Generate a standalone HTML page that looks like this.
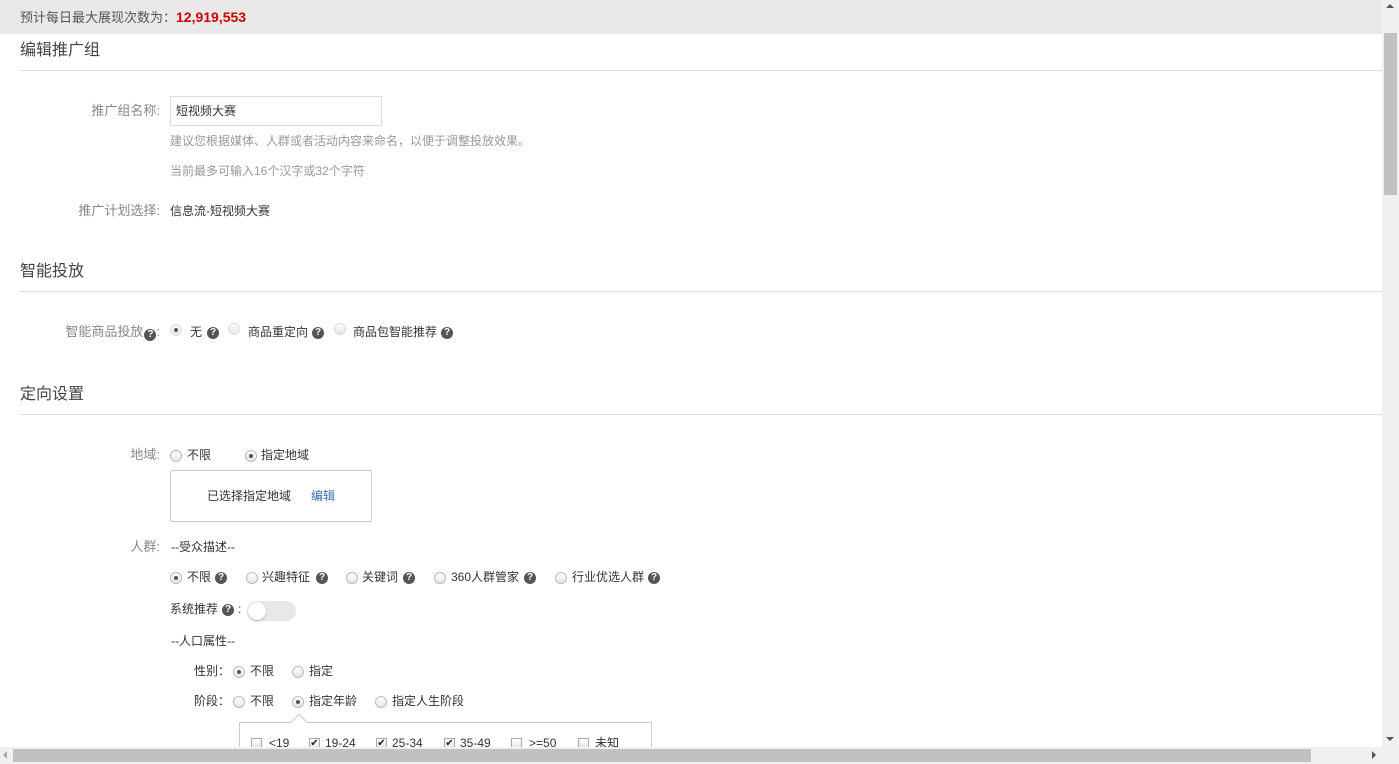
<!DOCTYPE html>
<html><head><meta charset="utf-8"><style>
*{margin:0;padding:0;box-sizing:border-box}
body{width:1399px;height:764px;overflow:hidden;background:#fff;font-family:"Liberation Sans","Noto Sans CJK SC",sans-serif;font-size:12px;color:#333;position:relative}
.a{position:absolute;white-space:nowrap;line-height:16px}
.top{position:absolute;left:0;top:0;width:1382px;height:34px;background:#e9e9e9}
.h{position:absolute;left:20px;font-size:16px;color:#444;line-height:20px}
.ln{position:absolute;left:20px;width:1362px;height:1px;background:#ddd}
.lb{position:absolute;width:160px;left:0;text-align:right;color:#888;font-size:13px;line-height:16px}
.r{position:absolute;width:12px;height:12px;border:1px solid #bbb;border-radius:50%;background:linear-gradient(#fff,#e6e6e6)}
.r.on::after{content:"";position:absolute;left:3px;top:3px;width:4px;height:4px;border-radius:50%;background:#555}
.q{position:absolute;width:12px;height:12px;border-radius:50%;background:#555;color:#fff;font-size:10px;font-weight:bold;line-height:12px;text-align:center}
.c{position:absolute;width:11px;height:11px;border:1px solid #aaa;background:linear-gradient(#fff,#e4e4e4);font-size:10px;line-height:9px;text-align:center;color:#222}
.g{color:#999}
</style></head><body>
<div class="top"></div>
<div class="a" style="left:20px;top:9px;font-size:13px;color:#555">预计每日最大展现次数为：<b style="color:#c00;font-size:14px">12,919,553</b></div>
<div class="h" style="top:41px">编辑推广组</div>
<div class="ln" style="top:70px"></div>
<div class="lb" style="top:103px">推广组名称:</div>
<div style="position:absolute;left:170px;top:96px;width:212px;height:30px;border:1px solid #ddd"></div>
<div class="a" style="left:176px;top:103px">短视频大赛</div>
<div class="a g" style="left:170px;top:133px">建议您根据媒体、人群或者活动内容来命名，以便于调整投放效果。</div>
<div class="a g" style="left:170px;top:163px">当前最多可输入16个汉字或32个字符</div>
<div class="lb" style="top:203px">推广计划选择:</div>
<div class="a" style="left:170px;top:203px">信息流-短视频大赛</div>
<div class="h" style="top:262px">智能投放</div>
<div class="ln" style="top:291px"></div>
<div class="lb" style="top:324px">智能商品投放<span style="display:inline-block;width:12px;height:12px;border-radius:50%;background:#555;color:#fff;font-size:10px;font-weight:bold;line-height:12px;text-align:center;vertical-align:-1px;margin-left:1px">?</span>:</div>
<div class="r on" style="left:170px;top:324px;border-color:#ddd"></div><div class="a" style="left:190px;top:324px">无</div><div class="q" style="left:207px;top:327px">?</div>
<div class="r" style="left:228px;top:323px;border-color:#ddd"></div><div class="a" style="left:248px;top:324px">商品重定向</div><div class="q" style="left:312px;top:327px">?</div>
<div class="r" style="left:334px;top:323px;border-color:#ddd"></div><div class="a" style="left:353px;top:324px">商品包智能推荐</div><div class="q" style="left:441px;top:327px">?</div>
<div class="h" style="top:385px">定向设置</div>
<div class="ln" style="top:414px"></div>
<div class="lb" style="top:447px">地域:</div>
<div class="r" style="left:170px;top:450px"></div><div class="a" style="left:187px;top:447px">不限</div>
<div class="r on" style="left:245px;top:450px"></div><div class="a" style="left:261px;top:447px">指定地域</div>
<div style="position:absolute;left:170px;top:470px;width:202px;height:52px;border:1px solid #ccc;border-radius:2px"></div>
<div class="a" style="left:207px;top:488px">已选择指定地域</div><div class="a" style="left:311px;top:488px;color:#3b6fb6">编辑</div>
<div class="lb" style="top:539px">人群:</div>
<div class="a" style="left:171px;top:539px">--受众描述--</div>
<div class="r on" style="left:170px;top:572px"></div><div class="a" style="left:187px;top:569px">不限</div><div class="q" style="left:215px;top:572px">?</div>
<div class="r" style="left:246px;top:572px"></div><div class="a" style="left:262px;top:569px">兴趣特征</div><div class="q" style="left:316px;top:572px">?</div>
<div class="r" style="left:346px;top:572px"></div><div class="a" style="left:362px;top:569px">关键词</div><div class="q" style="left:403px;top:572px">?</div>
<div class="r" style="left:434px;top:572px"></div><div class="a" style="left:451px;top:569px">360人群管家</div><div class="q" style="left:524px;top:572px">?</div>
<div class="r" style="left:555px;top:572px"></div><div class="a" style="left:572px;top:569px">行业优选人群</div><div class="q" style="left:648px;top:572px">?</div>
<div class="a" style="left:170px;top:601px">系统推荐</div><div class="q" style="left:222px;top:604px">?</div><div class="a" style="left:238px;top:601px">:</div>
<div style="position:absolute;left:247px;top:601px;width:49px;height:20px;border-radius:10px;background:#e8e8e8"><div style="position:absolute;left:1px;top:1px;width:18px;height:18px;border-radius:50%;background:#fff;box-shadow:0 1px 2px rgba(0,0,0,.25)"></div></div>
<div class="a" style="left:171px;top:633px">--人口属性--</div>
<div class="a" style="left:194px;top:663px">性别：</div>
<div class="r on" style="left:233px;top:666px"></div><div class="a" style="left:250px;top:663px">不限</div>
<div class="r" style="left:292px;top:666px"></div><div class="a" style="left:309px;top:663px">指定</div>
<div class="a" style="left:194px;top:693px">阶段：</div>
<div class="r" style="left:233px;top:696px"></div><div class="a" style="left:250px;top:693px">不限</div>
<div class="r on" style="left:292px;top:696px"></div><div class="a" style="left:309px;top:693px">指定年龄</div>
<div class="r" style="left:375px;top:696px"></div><div class="a" style="left:392px;top:693px">指定人生阶段</div>
<div style="position:absolute;left:239px;top:722px;width:413px;height:40px;border:1px solid #ccc"></div>
<div style="position:absolute;left:293px;top:716px;width:12px;height:12px;border-left:1px solid #ccc;border-top:1px solid #ccc;background:#fff;transform:rotate(45deg)"></div>
<div class="c" style="left:251px;top:738px"></div><div class="a" style="left:269px;top:735px">&lt;19</div>
<div class="c" style="left:309px;top:738px">✔</div><div class="a" style="left:325px;top:735px">19-24</div>
<div class="c" style="left:376px;top:738px">✔</div><div class="a" style="left:392px;top:735px">25-34</div>
<div class="c" style="left:444px;top:738px">✔</div><div class="a" style="left:460px;top:735px">35-49</div>
<div class="c" style="left:511px;top:738px"></div><div class="a" style="left:529px;top:735px">&gt;=50</div>
<div class="c" style="left:578px;top:738px"></div><div class="a" style="left:595px;top:735px">未知</div>
<div style="position:absolute;left:1382px;top:0;width:17px;height:764px;background:#f0f0f0"></div>
<div style="position:absolute;left:1384px;top:33px;width:13px;height:162px;background:#c1c1c1"></div>
<div style="position:absolute;left:1386px;top:4px;width:0;height:0;border:4px solid transparent;border-bottom-color:#555;border-top:0"></div>
<div style="position:absolute;left:1386px;top:737px;width:0;height:0;border:4px solid transparent;border-top-color:#555;border-bottom:0"></div>
<div style="position:absolute;left:0;top:747px;width:1382px;height:17px;background:#f0f0f0"></div>
<div style="position:absolute;left:13px;top:749px;width:1298px;height:13px;background:#c1c1c1"></div>
<div style="position:absolute;left:3px;top:751px;width:0;height:0;border:4px solid transparent;border-right-color:#aaa;border-left:0"></div>
<div style="position:absolute;left:1372px;top:751px;width:0;height:0;border:4px solid transparent;border-left-color:#555;border-right:0"></div>
</body></html>
